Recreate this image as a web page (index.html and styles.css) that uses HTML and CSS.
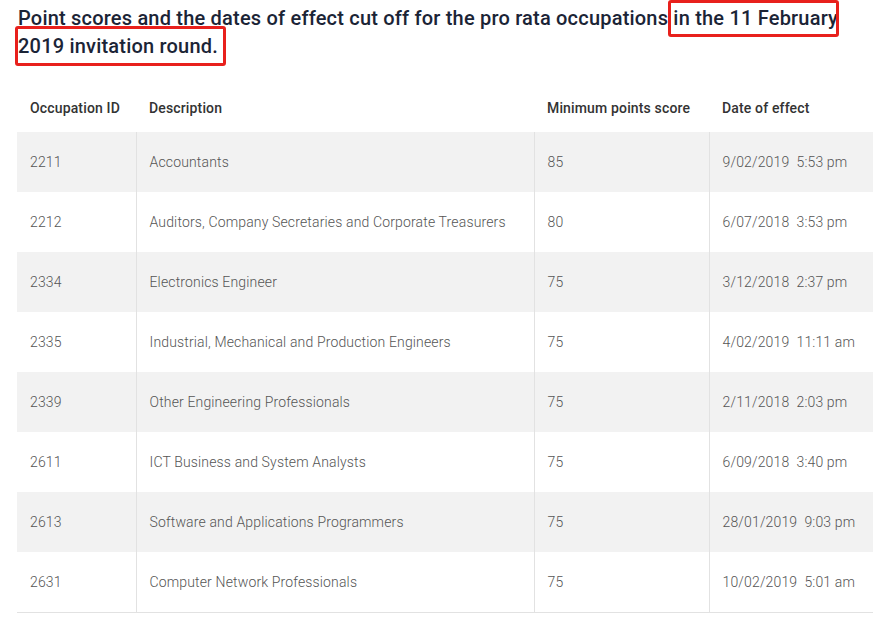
FILE: index.html
```html
<!DOCTYPE html>
<html>
<head>
<meta charset="utf-8">
<link rel="stylesheet" href="styles.css">
</head>
<body>
<div class="page">
  <h2 class="title">Point scores and the dates of effect cut off for the pro rata occupations in the 11 February 2019 invitation round.</h2>
  <span class="mark mark-a"></span>
  <span class="mark mark-b"></span>
  <table class="scores">
    <colgroup>
      <col class="c-id"><col class="c-desc"><col class="c-min"><col class="c-date">
    </colgroup>
    <thead>
      <tr><th>Occupation ID</th><th>Description</th><th>Minimum points score</th><th>Date of effect</th></tr>
    </thead>
    <tbody>
      <tr><td>2211</td><td>Accountants</td><td>85</td><td>9/02/2019&nbsp; 5:53 pm</td></tr>
      <tr><td>2212</td><td>Auditors, Company Secretaries and Corporate Treasurers</td><td>80</td><td>6/07/2018&nbsp; 3:53 pm</td></tr>
      <tr><td>2334</td><td>Electronics Engineer</td><td>75</td><td>3/12/2018&nbsp; 2:37 pm</td></tr>
      <tr><td>2335</td><td>Industrial, Mechanical and Production Engineers</td><td>75</td><td>4/02/2019&nbsp; 11:11 am</td></tr>
      <tr><td>2339</td><td>Other Engineering Professionals</td><td>75</td><td>2/11/2018&nbsp; 2:03 pm</td></tr>
      <tr><td>2611</td><td>ICT Business and System Analysts</td><td>75</td><td>6/09/2018&nbsp; 3:40 pm</td></tr>
      <tr><td>2613</td><td>Software and Applications Programmers</td><td>75</td><td>28/01/2019&nbsp; 9:03 pm</td></tr>
      <tr><td>2631</td><td>Computer Network Professionals</td><td>75</td><td>10/02/2019&nbsp; 5:01 am</td></tr>
    </tbody>
  </table>
</div>
</body>
</html>
```

FILE: styles.css
```css
html, body {
  margin: 0;
  padding: 0;
  background: #ffffff;
}
.page {
  position: relative;
  font-family: Roboto, "Liberation Sans", sans-serif;
}
.title {
  margin: 0;
  padding: 4px 0 0 18px;
  width: 835px;
  font-size: 20px;
  line-height: 28px;
  font-weight: 500;
  letter-spacing: 0.2px;
  color: #1b2436;
}
.mark {
  position: absolute;
  border: 3px solid #e8201c;
  border-radius: 3px;
  box-sizing: border-box;
}
.mark-a {
  left: 668px;
  top: 0;
  width: 171px;
  height: 37px;
}
.mark-b {
  left: 15px;
  top: 26px;
  width: 211px;
  height: 40px;
}
.scores {
  margin: 24px 0 0 17px;
  width: 856px;
  border-collapse: collapse;
  table-layout: fixed;
  font-size: 14px;
  letter-spacing: 0.15px;
}
.c-id { width: 119px; }
.c-desc { width: 398px; }
.c-min { width: 175px; }
.c-date { width: 164px; }
.scores th {
  text-align: left;
  font-weight: 500;
  color: #333333;
  height: 48px;
  padding: 0 13px;
  box-sizing: border-box;
}
.scores td {
  height: 60px;
  padding: 0 13px;
  box-sizing: border-box;
  color: #555555;
  font-weight: 300;
  border-left: 1px solid #e2e2e2;
  white-space: nowrap;
}
.scores td:first-child {
  border-left: none;
}
.scores tbody tr:nth-child(odd) td {
  background: #f2f2f2;
}
.scores tbody tr:last-child td {
  border-bottom: 1px solid #e2e2e2;
}
```
